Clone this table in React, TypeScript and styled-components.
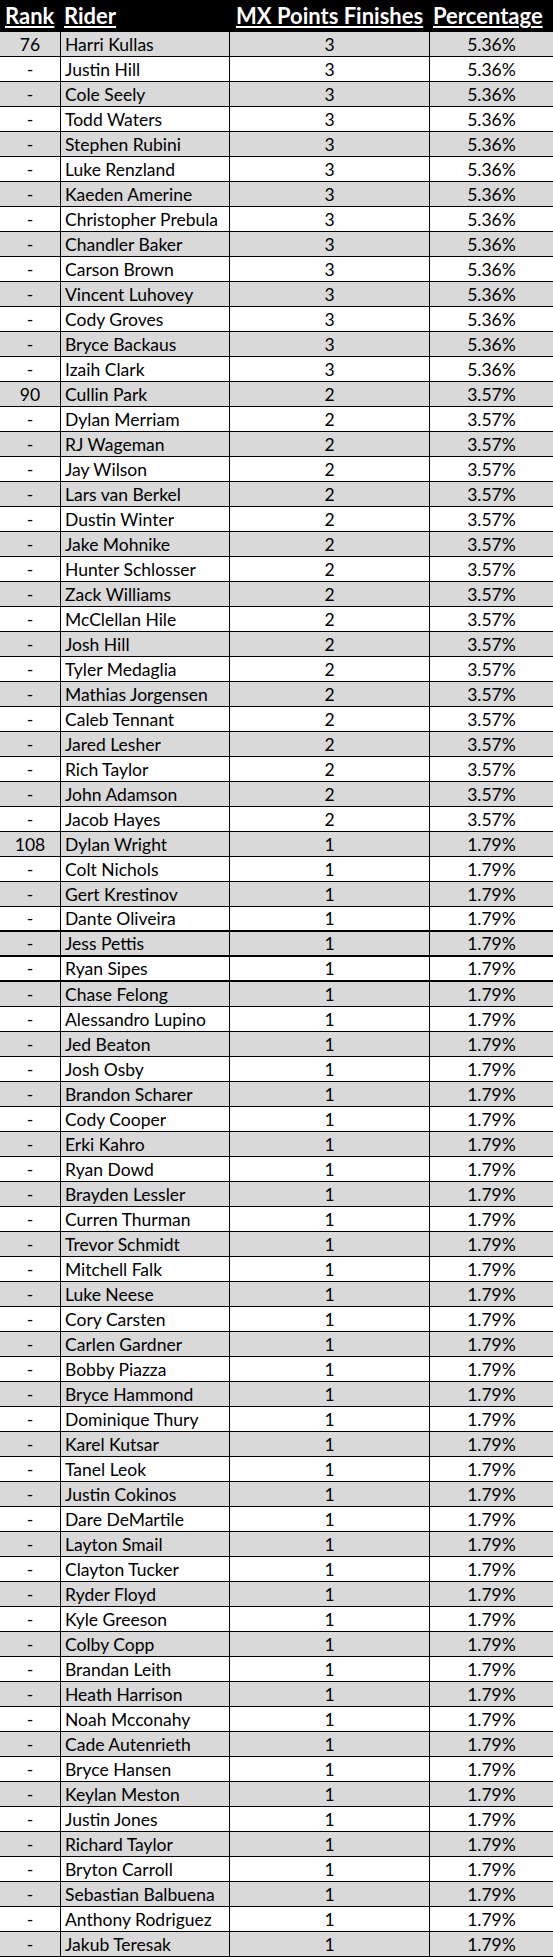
import React from 'react';
import styled, {createGlobalStyle} from "styled-components";

const GlobalStyle = createGlobalStyle`
  html, body {
    margin: 0;
    padding: 0;
    background: #ffffff;
  }
`;

const Sheet = styled.div`
  width: 553px;
  font-family: Lato, "Liberation Sans", sans-serif;
  color: #000;
`;

const HeaderRow = styled.div`
  display: grid;
  grid-template-columns: 60px 169px 200px 124px;
  height: 32px;
  background: #000;
  align-items: end;
  padding-bottom: 3px;
  box-sizing: border-box;
`;

const HeaderCell = styled.div<{ $pad: number }>`
  padding-left: ${p => p.$pad}px;
  font-size: 22px;
  font-weight: 700;
  color: #fff;
  text-decoration: underline;
  text-decoration-thickness: 2px;
  text-underline-offset: 2px;
  white-space: nowrap;
  line-height: 26px;
`;

const Row = styled.div<{ $shade: boolean; $thick: boolean }>`
  display: grid;
  grid-template-columns: 60px 169px 200px 124px;
  height: 25px;
  box-sizing: border-box;
  background: ${p => p.$shade ? '#d9d9d9' : '#ffffff'};
  border-bottom: ${p => p.$thick ? 2 : 1}px solid #000;
`;

const Cell = styled.div<{ $align: 'left' | 'center'; $first?: boolean }>`
  display: flex;
  align-items: center;
  justify-content: ${p => p.$align === 'left' ? 'flex-start' : 'center'};
  padding-left: ${p => p.$align === 'left' ? '4px' : '0'};
  border-left: ${p => p.$first ? 'none' : '1px solid #000'};
  font-size: 17.5px;
  white-space: nowrap;
  overflow: hidden;
`;

interface Rider {
  rank: string
  name: string
  finishes: number
  pct: string
}

const group = (rank: string, finishes: number, pct: string, names: string[]): Rider[] =>
  names.map((name, i) => ({rank: i === 0 ? rank : '-', name, finishes, pct}));

const riders: Rider[] = [
  ...group('76', 3, '5.36%', [
    'Harri Kullas', 'Justin Hill', 'Cole Seely', 'Todd Waters', 'Stephen Rubini', 'Luke Renzland',
    'Kaeden Amerine', 'Christopher Prebula', 'Chandler Baker', 'Carson Brown', 'Vincent Luhovey',
    'Cody Groves', 'Bryce Backaus', 'Izaih Clark',
  ]),
  ...group('90', 2, '3.57%', [
    'Cullin Park', 'Dylan Merriam', 'RJ Wageman', 'Jay Wilson', 'Lars van Berkel', 'Dustin Winter',
    'Jake Mohnike', 'Hunter Schlosser', 'Zack Williams', 'McClellan Hile', 'Josh Hill', 'Tyler Medaglia',
    'Mathias Jorgensen', 'Caleb Tennant', 'Jared Lesher', 'Rich Taylor', 'John Adamson', 'Jacob Hayes',
  ]),
  ...group('108', 1, '1.79%', [
    'Dylan Wright', 'Colt Nichols', 'Gert Krestinov', 'Dante Oliveira', 'Jess Pettis', 'Ryan Sipes',
    'Chase Felong', 'Alessandro Lupino', 'Jed Beaton', 'Josh Osby', 'Brandon Scharer', 'Cody Cooper',
    'Erki Kahro', 'Ryan Dowd', 'Brayden Lessler', 'Curren Thurman', 'Trevor Schmidt', 'Mitchell Falk',
    'Luke Neese', 'Cory Carsten', 'Carlen Gardner', 'Bobby Piazza', 'Bryce Hammond', 'Dominique Thury',
    'Karel Kutsar', 'Tanel Leok', 'Justin Cokinos', 'Dare DeMartile', 'Layton Smail', 'Clayton Tucker',
    'Ryder Floyd', 'Kyle Greeson', 'Colby Copp', 'Brandan Leith', 'Heath Harrison', 'Noah Mcconahy',
    'Cade Autenrieth', 'Bryce Hansen', 'Keylan Meston', 'Justin Jones', 'Richard Taylor', 'Bryton Carroll',
    'Sebastian Balbuena', 'Anthony Rodriguez', 'Jakub Teresak',
  ]),
];

// rows that sit on a heavier rule below
const thickAfter = ['Dante Oliveira', 'Jess Pettis', 'Ryan Sipes'];

const App = () => {
  return (
    <Sheet>
      <GlobalStyle/>
      <HeaderRow>
        <HeaderCell $pad={5}>Rank</HeaderCell>
        <HeaderCell $pad={4}>Rider</HeaderCell>
        <HeaderCell $pad={7}>MX Points Finishes</HeaderCell>
        <HeaderCell $pad={4}>Percentage</HeaderCell>
      </HeaderRow>
      {riders.map((r, i) => (
        <Row key={r.name} $shade={i % 2 === 0} $thick={thickAfter.includes(r.name)}>
          <Cell $align="center" $first>{r.rank}</Cell>
          <Cell $align="left">{r.name}</Cell>
          <Cell $align="center">{r.finishes}</Cell>
          <Cell $align="center">{r.pct}</Cell>
        </Row>
      ))}
    </Sheet>
  );
};

export default App;
